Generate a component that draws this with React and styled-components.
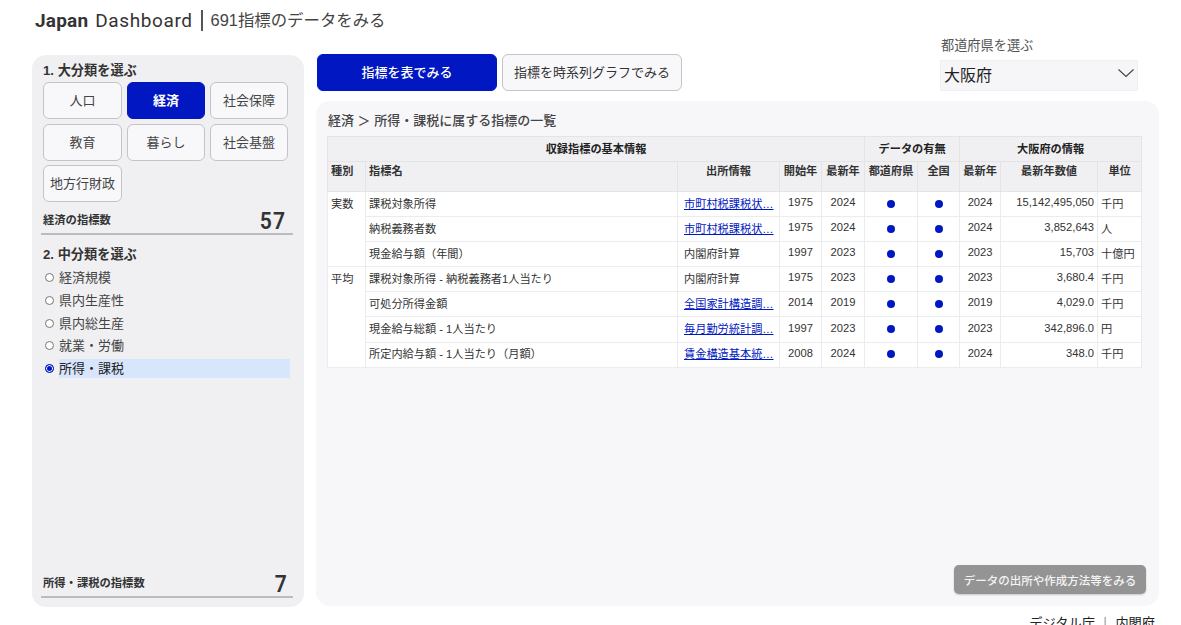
import React from 'react'
import styled, { createGlobalStyle } from 'styled-components'

const GlobalStyle = createGlobalStyle`
    html, body {
        margin: 0;
        height: 625px;
        overflow: hidden;
        background: #fff;
        color: #333;
        font-family: "Liberation Sans", "Noto Sans CJK JP", sans-serif;
    }
    * { box-sizing: border-box; }
`

const Page = styled.div`
    width: 1181px;
    height: 625px;
    padding: 8px 22px 0 32px;
    overflow: hidden;
`

const Title = styled.h1`
    margin: 0 0 0 3px;
    height: 24px;
    display: flex;
    align-items: center;
    font-family: Roboto, "Noto Sans CJK JP", sans-serif;
    font-size: 19px;
    font-weight: 400;
    letter-spacing: 0.6px;
    color: #333;
    strong { font-weight: 700; letter-spacing: 0.2px; margin-right: 7px; }
`

const Sub = styled.span`
    margin-left: 8px;
    padding-left: 8px;
    border-left: 2px solid #555;
    font-family: "Liberation Sans", "Noto Sans CJK JP", sans-serif;
    font-size: 16.4px;
    letter-spacing: 0;
    line-height: 21px;
    color: #444;
`

const Layout = styled.div`
    display: grid;
    grid-template-columns: 272px 843px;
    column-gap: 12px;
    margin-top: 5px;
`

const Sidebar = styled.aside`
    margin-top: 18px;
    height: 552px;
    padding: 6px 11px 9px 11px;
    display: flex;
    flex-direction: column;
    background: #f0f0f3;
    border-radius: 14px;
`

const StepTitle = styled.div`
    margin-top: ${p => p.$gap || 0}px;
    font-size: 13.2px;
    font-weight: 700;
    line-height: 19px;
    color: #333;
`

const CategoryGrid = styled.div`
    width: 245px;
    margin-top: 2px;
    display: grid;
    grid-template-columns: 79px 78px 78px;
    grid-auto-rows: 37px;
    column-gap: 5px;
    row-gap: 4.5px;
`

const CategoryButton = styled.button`
    padding: 0 0 2px;
    font-family: inherit;
    font-size: 13px;
    font-weight: ${p => (p.$active ? 700 : 400)};
    color: ${p => (p.$active ? '#fff' : '#444')};
    background: ${p => (p.$active ? '#0017c1' : '#f8f8fb')};
    border: 1px solid ${p => (p.$active ? '#0017c1' : '#c4c4c8')};
    border-radius: 6px;
`

const CountRow = styled.div`
    margin: ${p => (p.$bottom ? 'auto 0 0 -2px' : '6px 0 0 -2px')};
    height: 27px;
    padding: 0 ${p => (p.$bottom ? 5 : 7)}px 0 2px;
    display: flex;
    align-items: center;
    justify-content: space-between;
    border-bottom: 2px solid #bbb;
`

const CountLabel = styled.span`
    padding-bottom: 3px;
    font-size: 11.3px;
    font-weight: 700;
    color: #333;
`

const CountValue = styled.span`
    display: inline-block;
    padding-top: 1px;
    font-family: Roboto, sans-serif;
    font-size: 24px;
    font-weight: 600;
    line-height: 24px;
    letter-spacing: 1.5px;
    color: #333;
    transform: scaleX(0.88);
    transform-origin: right center;
`

const RadioList = styled.div`
    margin: 2.5px 3px 0 0;
    display: flex;
    flex-direction: column;
`

const RadioRow = styled.div`
    height: 22.7px;
    display: flex;
    align-items: center;
    gap: 5px;
    font-size: 13px;
    color: #444;
`

const RadioMark = styled.span`
    width: 9px;
    height: 9px;
    margin-left: 2px;
    flex: none;
    border-radius: 50%;
    border: 1px solid ${p => (p.$on ? '#0017c1' : '#777')};
    background: ${p => (p.$on ? '#0017c1' : '#fff')};
    box-shadow: ${p => (p.$on ? 'inset 0 0 0 1px #fff' : 'none')};
`

const RadioText = styled.span`
    flex: 1;
    height: 19px;
    line-height: 19px;
    color: ${p => (p.$on ? '#222' : '#444')};
    background: ${p => (p.$on ? '#d7e5fd' : 'transparent')};
`

const MainColumn = styled.main`
    display: flex;
    flex-direction: column;
`

const Toolbar = styled.div`
    height: 54px;
    padding-left: 1px;
    display: flex;
    align-items: flex-end;
    gap: 5px;
`

const ViewButton = styled.button`
    width: 180px;
    height: 37px;
    padding: 0 0 2px;
    font-family: inherit;
    font-size: 13px;
    font-weight: ${p => (p.$primary ? 500 : 400)};
    color: ${p => (p.$primary ? '#fff' : '#333')};
    background: ${p => (p.$primary ? '#0017c1' : '#f8f8fb')};
    border: 1px solid ${p => (p.$primary ? '#0017c1' : '#c4c4c8')};
    border-radius: 6px;
`

const PrefPicker = styled.div`
    width: 198px;
    margin-left: auto;
    margin-right: 21px;
    font-size: 13.2px;
    color: #555;
`

const PrefLabel = styled.div`
    height: 23px;
    padding-left: 1px;
    line-height: 18px;
`

const PrefSelect = styled.div`
    height: 31px;
    padding: 0 2px 4px 3px;
    display: flex;
    align-items: center;
    justify-content: space-between;
    font-size: 16px;
    color: #222;
    background: #f6f6f9;
    border: 1px solid #f0f0f2;
    svg { margin-bottom: 2px; }
`

const Panel = styled.section`
    position: relative;
    height: 505px;
    margin-top: 10px;
    padding: 10px 11px;
    background: #f7f7fa;
    border-radius: 14px;
`

const PanelTitle = styled.div`
    height: 25px;
    padding-left: 1px;
    font-size: 13px;
    font-weight: 500;
    line-height: 19px;
    color: #444;
`

const Table = styled.table`
    width: 814px;
    table-layout: fixed;
    border-collapse: collapse;
    font-size: 11.2px;
    color: #333;
    background: #fff;
`

const GroupHead = styled.th`
    height: 25px;
    padding: 0 0 2px;
    font-size: 11.2px;
    font-weight: 700;
    color: #222;
    text-align: center;
    background: #f0f0f3;
    border: 1px solid #e4e4e7;
`

const ColHead = styled.th`
    height: 30px;
    padding: 1px 3px 0;
    font-size: 11.2px;
    font-weight: 700;
    color: #333;
    line-height: 16px;
    vertical-align: top;
    text-align: ${p => p.$align || 'center'};
    white-space: nowrap;
    overflow: hidden;
    background: #f0f0f3;
    border: 1px solid #e4e4e7;
`

const Cell = styled.td`
    height: 25.1px;
    padding: ${p => (p.$top ? '5px 3px 0' : p.$num ? '0 3px 4px' : '0 3px 0.5px')};
    padding-left: ${p => (p.$source ? '6px' : '3px')};
    line-height: 14px;
    text-align: ${p => p.$align || 'left'};
    vertical-align: ${p => (p.$top ? 'top' : 'middle')};
    white-space: nowrap;
    overflow: hidden;
    border: 1px solid #ececef;
`

const SourceLink = styled.a`
    color: #0017c1;
    text-decoration: underline;
`

const Dot = styled.span`
    display: block;
    width: 8px;
    height: 8px;
    margin: 0 auto;
    border-radius: 50%;
    background: #0017c1;
`

const InfoButton = styled.button`
    position: absolute;
    right: 13px;
    bottom: 12px;
    width: 192px;
    height: 29px;
    padding: 0;
    font-family: inherit;
    font-size: 11.5px;
    font-weight: 500;
    color: #f4f4f4;
    background: #949494;
    border: none;
    border-radius: 5px;
    box-shadow: 0 1px 2px rgba(0, 0, 0, 0.2);
`

const Footer = styled.div`
    margin-top: 9px;
    padding-right: 4px;
    text-align: right;
    font-size: 13.2px;
    line-height: 18px;
    color: #222;
`

const CATEGORIES = ['人口', '経済', '社会保障', '教育', '暮らし', '社会基盤', '地方行財政']
const SUBCATEGORIES = ['経済規模', '県内生産性', '県内総生産', '就業・労働', '所得・課税']
const WIDTHS = [38, 312, 102, 42, 43, 53, 42, 41, 97, 44]

const ROWS = [
    { kind: '実数', span: 3, name: '課税対象所得', source: '市町村税課税状…', link: true, start: 1975, end: 2024, latest: 2024, value: '15,142,495,050', unit: '千円' },
    { name: '納税義務者数', source: '市町村税課税状…', link: true, start: 1975, end: 2024, latest: 2024, value: '3,852,643', unit: '人' },
    { name: '現金給与額（年間）', source: '内閣府計算', start: 1997, end: 2023, latest: 2023, value: '15,703', unit: '十億円' },
    { kind: '平均', span: 4, name: '課税対象所得 - 納税義務者1人当たり', source: '内閣府計算', start: 1975, end: 2023, latest: 2023, value: '3,680.4', unit: '千円' },
    { name: '可処分所得金額', source: '全国家計構造調…', link: true, start: 2014, end: 2019, latest: 2019, value: '4,029.0', unit: '千円' },
    { name: '現金給与総額 - 1人当たり', source: '毎月勤労統計調…', link: true, start: 1997, end: 2023, latest: 2023, value: '342,896.0', unit: '円' },
    { name: '所定内給与額 - 1人当たり（月額）', source: '賃金構造基本統…', link: true, start: 2008, end: 2024, latest: 2024, value: '348.0', unit: '千円' },
]

const App = () => {
    return (
        <Page>
            <GlobalStyle />
            <Title>
                <strong>Japan</strong> Dashboard
                <Sub>691指標のデータをみる</Sub>
            </Title>

            <Layout>
                <Sidebar>
                    <StepTitle>1. 大分類を選ぶ</StepTitle>
                    <CategoryGrid>
                        {CATEGORIES.map(c => (
                            <CategoryButton key={c} $active={c === '経済'}>{c}</CategoryButton>
                        ))}
                    </CategoryGrid>
                    <CountRow>
                        <CountLabel>経済の指標数</CountLabel>
                        <CountValue>57</CountValue>
                    </CountRow>
                    <StepTitle $gap={10}>2. 中分類を選ぶ</StepTitle>
                    <RadioList>
                        {SUBCATEGORIES.map(s => (
                            <RadioRow key={s}>
                                <RadioMark $on={s === '所得・課税'} />
                                <RadioText $on={s === '所得・課税'}>{s}</RadioText>
                            </RadioRow>
                        ))}
                    </RadioList>
                    <CountRow $bottom>
                        <CountLabel>所得・課税の指標数</CountLabel>
                        <CountValue>7</CountValue>
                    </CountRow>
                </Sidebar>

                <MainColumn>
                    <Toolbar>
                        <ViewButton $primary>指標を表でみる</ViewButton>
                        <ViewButton>指標を時系列グラフでみる</ViewButton>
                        <PrefPicker>
                            <PrefLabel>都道府県を選ぶ</PrefLabel>
                            <PrefSelect>
                                大阪府
                                <svg width="18" height="10" viewBox="0 0 18 10" fill="none" stroke="#444" strokeWidth="1.1">
                                    <path d="M1.5 1.5 L9 8.5 L16.5 1.5" />
                                </svg>
                            </PrefSelect>
                        </PrefPicker>
                    </Toolbar>

                    <Panel>
                        <PanelTitle>経済 ＞ 所得・課税に属する指標の一覧</PanelTitle>
                        <Table>
                            <colgroup>
                                {WIDTHS.map((w, i) => <col key={i} width={w} />)}
                            </colgroup>
                            <thead>
                                <tr>
                                    <GroupHead colSpan={5}>収録指標の基本情報</GroupHead>
                                    <GroupHead colSpan={2}>データの有無</GroupHead>
                                    <GroupHead colSpan={3}>大阪府の情報</GroupHead>
                                </tr>
                                <tr>
                                    <ColHead $align="left">種別</ColHead>
                                    <ColHead $align="left">指標名</ColHead>
                                    <ColHead>出所情報</ColHead>
                                    <ColHead>開始年</ColHead>
                                    <ColHead>最新年</ColHead>
                                    <ColHead>都道府県</ColHead>
                                    <ColHead>全国</ColHead>
                                    <ColHead>最新年</ColHead>
                                    <ColHead>最新年数値</ColHead>
                                    <ColHead>単位</ColHead>
                                </tr>
                            </thead>
                            <tbody>
                                {ROWS.map(r => (
                                    <tr key={r.name}>
                                        {r.kind && <Cell $top rowSpan={r.span}>{r.kind}</Cell>}
                                        <Cell>{r.name}</Cell>
                                        <Cell $source>{r.link ? <SourceLink href="#">{r.source}</SourceLink> : r.source}</Cell>
                                        <Cell $num $align="center">{r.start}</Cell>
                                        <Cell $num $align="center">{r.end}</Cell>
                                        <Cell><Dot /></Cell>
                                        <Cell><Dot /></Cell>
                                        <Cell $num $align="center">{r.latest}</Cell>
                                        <Cell $num $align="right">{r.value}</Cell>
                                        <Cell>{r.unit}</Cell>
                                    </tr>
                                ))}
                            </tbody>
                        </Table>
                        <InfoButton>データの出所や作成方法等をみる</InfoButton>
                    </Panel>
                    <Footer>デジタル庁 ｜ 内閣府</Footer>
                </MainColumn>
            </Layout>
        </Page>
    )
}

export default App
